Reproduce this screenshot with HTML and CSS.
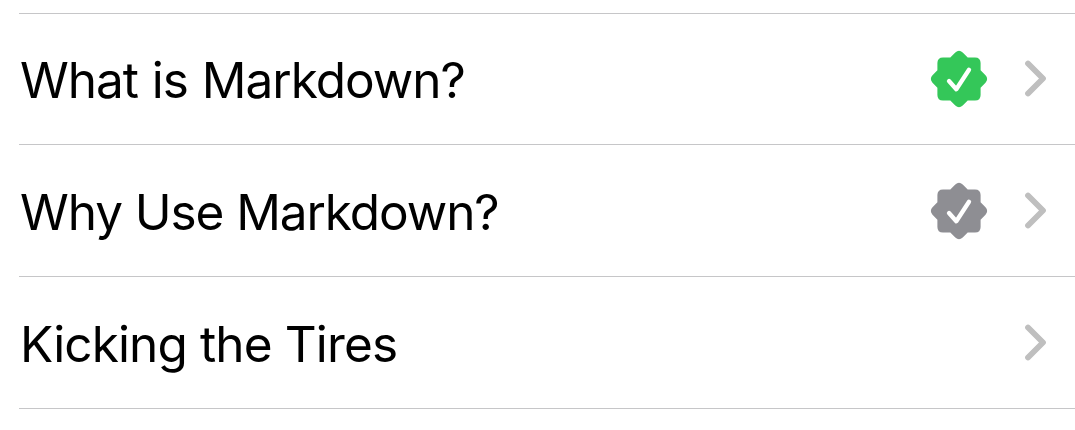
FILE: index.html
```html
<!DOCTYPE html>
<html lang="en">
<head>
<meta charset="utf-8">
<title>Markdown Guide</title>
<link rel="stylesheet" href="styles.css">
</head>
<body>
<ul class="list">
  <li class="row">
    <span class="title title-what">What is Markdown?</span>
    <svg class="badge done" viewBox="0 0 58 58"><path class="seal" d="M25.300 2.500Q29-.8 32.700 2.500L37.700 7.400H45Q50.600 7.400 50.600 13V20.300L55.500 25.300Q58.800 29 55.500 32.700L50.600 37.700V45Q50.600 50.600 45 50.600H37.700L32.700 55.500Q29 58.800 25.300 55.500L20.300 50.600H13Q7.400 50.600 7.400 45V37.700L2.500 32.700Q-.8 29 2.500 25.300L7.400 20.300V13Q7.400 7.400 13 7.400H20.300Z"/><path class="check" d="M19 31L26.300 39.200L39 19.800"/></svg>
    <svg class="chevron" viewBox="0 0 24 40"><path d="M5 4.500L20 19.500L5 34.500"/></svg>
  </li>
  <li class="row">
    <span class="title title-why">Why Use Markdown?</span>
    <svg class="badge" viewBox="0 0 58 58"><path class="seal" d="M25.300 2.500Q29-.8 32.700 2.500L37.700 7.400H45Q50.600 7.400 50.600 13V20.300L55.500 25.300Q58.800 29 55.500 32.700L50.600 37.700V45Q50.600 50.600 45 50.600H37.700L32.700 55.500Q29 58.800 25.300 55.500L20.300 50.600H13Q7.400 50.600 7.400 45V37.700L2.500 32.700Q-.8 29 2.500 25.300L7.400 20.300V13Q7.400 7.400 13 7.400H20.300Z"/><path class="check" d="M19 31L26.300 39.200L39 19.800"/></svg>
    <svg class="chevron" viewBox="0 0 24 40"><path d="M5 4.500L20 19.500L5 34.500"/></svg>
  </li>
  <li class="row">
    <span class="title title-kick">Kicking the Tires</span>
    <svg class="chevron" viewBox="0 0 24 40"><path d="M5 4.500L20 19.500L5 34.500"/></svg>
  </li>
</ul>
</body>
</html>
```
FILE: styles.css
```css
body { margin: 0; background: #fff; color: #000; font-family: Inter, sans-serif; overflow: hidden; }
.list { list-style: none; margin: 13px 0 0 19px; padding: 0; border-top: 1px solid #c6c6c8; }
.row { display: flex; align-items: center; box-sizing: border-box; height: 132px; padding: 1px 28px 0 1px; border-bottom: 1px solid #c6c6c8; }
.row:first-child { height: 131px; padding-top: 0; }
.title { flex: 1; font-size: 49.500px; line-height: 60px; padding-top: 2px; white-space: nowrap; }
.title-what { letter-spacing: -1.020px; word-spacing: 1px; }
.title-why { letter-spacing: -1.080px; }
.title-kick { letter-spacing: -0.870px; }
.badge { width: 58px; height: 58px; margin-right: 35px; }
.seal { fill: #8e8e93; }
.done .seal { fill: #34c759; }
.check { fill: none; stroke: #fff; stroke-width: 4.300; stroke-linecap: round; stroke-linejoin: round; }
.chevron { width: 24px; height: 40px; }
.chevron path { fill: none; stroke: #bfbfbf; stroke-width: 5.800; stroke-linecap: round; stroke-linejoin: round; }
```
